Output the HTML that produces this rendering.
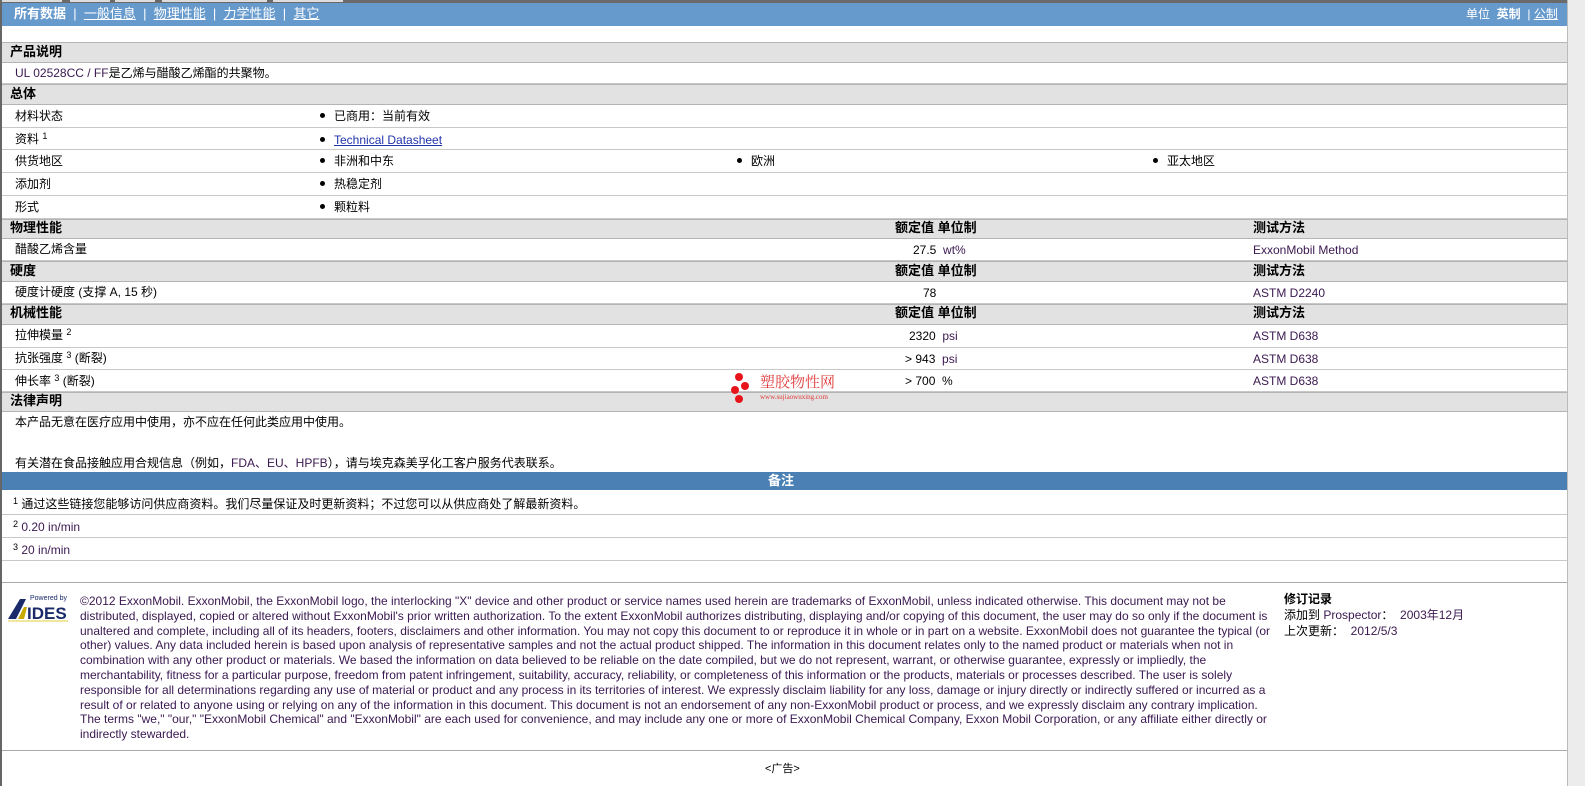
<!DOCTYPE html>
<html><head><meta charset="utf-8">
<style>
*{margin:0;padding:0;box-sizing:border-box}
body{width:1585px;height:786px;position:relative;overflow:hidden;background:#fff;font-family:"Liberation Sans","Noto Sans CJK SC",sans-serif;font-size:12px;color:#000}
.a{position:absolute}
.row{position:absolute;left:2px;width:1565px;border-bottom:1px solid #c8c8c8}
.h{background:#e2e2e2;border-top:1px solid #b4b4b4;border-bottom:1px solid #b4b4b4;font-weight:bold;font-size:13px}
.t{position:absolute;white-space:nowrap;line-height:14px}
.pu{color:#3a1850}
sup{font-size:9px;vertical-align:top;position:relative;top:-3px}
.b{font-weight:bold}
.dot{display:inline-block;width:5px;height:5px;border-radius:50%;background:#000;margin-right:9px;vertical-align:middle;position:relative;top:-1px}
</style></head><body>
<div class="a" style="left:0;top:0;width:2px;height:786px;background:#666"></div>
<div class="a" style="left:1567px;top:0;width:18px;height:786px;background:#ececec;border-left:1px solid #bbb"></div>
<div class="a" style="left:0;top:0;width:1567px;height:3px;background:#6a6a6a"></div>
<div class="a" style="left:2px;top:0;width:60px;height:2px;background:#ddd"></div>
<div class="a" style="left:70px;top:0;width:40px;height:2px;background:#ddd"></div>
<div class="a" style="left:115px;top:0;width:40px;height:2px;background:#ddd"></div>
<div class="a" style="left:162px;top:0;width:105px;height:2px;background:#ddd"></div>
<div class="a" style="left:273px;top:0;width:70px;height:2px;background:#ddd"></div>
<div class="a" style="left:2px;top:3px;width:1565px;height:23px;background:#6699cc"></div>
<div class="t" style="left:14px;top:7px;color:#fff;font-size:13px"><b>所有数据</b> &nbsp;| &nbsp;<u>一般信息</u> &nbsp;| &nbsp;<u>物理性能</u> &nbsp;| &nbsp;<u>力学性能</u> &nbsp;| &nbsp;<u>其它</u></div>
<div class="t" style="left:1466px;top:7px;color:#fff">单位 &nbsp;<b>英制</b> &nbsp;| <u>公制</u></div>

<div class="row h" style="top:42px;height:21px"></div><div class="t b" style="left:10px;top:45px;font-size:13px">产品说明</div>
<div class="row" style="top:63px;height:21px"></div><div class="t" style="left:15px;top:66px"><span class="pu">UL 02528CC / FF</span>是乙烯与醋酸乙烯酯的共聚物。</div>
<div class="row h" style="top:84px;height:21px"></div><div class="t b" style="left:10px;top:87px;font-size:13px">总体</div>
<div class="row" style="top:105px;height:23px"></div><div class="t" style="left:15px;top:109px">材料状态</div><div class="t" style="left:320px;top:109px"><span class="dot"></span>已商用：当前有效</div>
<div class="row" style="top:128px;height:22px"></div><div class="t" style="left:15px;top:132px">资料 <sup>1</sup></div><div class="t" style="left:320px;top:133px"><span class="dot"></span><u style="color:#2233aa">Technical Datasheet</u></div>
<div class="row" style="top:150px;height:23px"></div><div class="t" style="left:15px;top:154px">供货地区</div><div class="t" style="left:320px;top:154px"><span class="dot"></span>非洲和中东</div><div class="t" style="left:737px;top:154px"><span class="dot"></span>欧洲</div><div class="t" style="left:1153px;top:154px"><span class="dot"></span>亚太地区</div>
<div class="row" style="top:173px;height:23px"></div><div class="t" style="left:15px;top:177px">添加剂</div><div class="t" style="left:320px;top:177px"><span class="dot"></span>热稳定剂</div>
<div class="row" style="top:196px;height:23px"></div><div class="t" style="left:15px;top:200px">形式</div><div class="t" style="left:320px;top:200px"><span class="dot"></span>颗粒料</div>

<div class="row h" style="top:219px;height:20px"></div><div class="t b" style="left:10px;top:221px;font-size:13px">物理性能</div><div class="t b" style="left:895px;top:221px;font-size:13px">额定值 单位制</div><div class="t b" style="left:1253px;top:221px;font-size:13px">测试方法</div>
<div class="row" style="top:239px;height:22px"></div><div class="t" style="left:15px;top:242px">醋酸乙烯含量</div><div class="t" style="left:913px;top:243px">27.5 &nbsp;<span class="pu">wt%</span></div><div class="t pu" style="left:1253px;top:243px">ExxonMobil Method</div>
<div class="row h" style="top:261px;height:21px"></div><div class="t b" style="left:10px;top:264px;font-size:13px">硬度</div><div class="t b" style="left:895px;top:264px;font-size:13px">额定值 单位制</div><div class="t b" style="left:1253px;top:264px;font-size:13px">测试方法</div>
<div class="row" style="top:282px;height:22px"></div><div class="t" style="left:15px;top:285px">硬度计硬度 (支撑 A, 15 秒)</div><div class="t" style="left:923px;top:286px">78</div><div class="t pu" style="left:1253px;top:286px">ASTM D2240</div>
<div class="row h" style="top:304px;height:21px"></div><div class="t b" style="left:10px;top:306px;font-size:13px">机械性能</div><div class="t b" style="left:895px;top:306px;font-size:13px">额定值 单位制</div><div class="t b" style="left:1253px;top:306px;font-size:13px">测试方法</div>
<div class="row" style="top:325px;height:23px"></div><div class="t" style="left:15px;top:328px">拉伸模量 <sup>2</sup></div><div class="t" style="left:909px;top:329px">2320 &nbsp;<span class="pu">psi</span></div><div class="t pu" style="left:1253px;top:329px">ASTM D638</div>
<div class="row" style="top:348px;height:22px"></div><div class="t" style="left:15px;top:351px">抗张强度 <sup>3</sup> (断裂)</div><div class="t" style="left:905px;top:352px">&gt; 943 &nbsp;<span class="pu">psi</span></div><div class="t pu" style="left:1253px;top:352px">ASTM D638</div>
<div class="row" style="top:370px;height:22px"></div><div class="t" style="left:15px;top:374px">伸长率 <sup>3</sup> (断裂)</div><div class="t" style="left:905px;top:374px">&gt; 700 &nbsp;%</div><div class="t pu" style="left:1253px;top:374px">ASTM D638</div>
<div class="row h" style="top:392px;height:20px"></div><div class="t b" style="left:10px;top:394px;font-size:13px">法律声明</div>
<div class="t" style="left:15px;top:415px">本产品无意在医疗应用中使用，亦不应在任何此类应用中使用。</div>
<div class="t" style="left:15px;top:456px">有关潜在食品接触应用合规信息（例如，<span class="pu">FDA、EU、HPFB</span>），请与埃克森美孚化工客户服务代表联系。</div>

<div class="a" style="left:735px;top:373px;width:8px;height:8px;border-radius:50%;background:#e8141c"></div>
<div class="a" style="left:741px;top:382px;width:8px;height:8px;border-radius:50%;background:#e8141c"></div>
<div class="a" style="left:731px;top:386px;width:8px;height:8px;border-radius:50%;background:#e8141c"></div>
<div class="a" style="left:735px;top:395px;width:8px;height:8px;border-radius:50%;background:#e8141c"></div>
<div class="t" style="left:760px;top:375px;color:#e03a3a;font-size:15px;font-family:'Noto Serif CJK SC',serif">塑胶物性网</div>
<div class="t" style="left:760px;top:393px;color:#e03a3a;font-size:7px;font-family:'Liberation Serif',serif;line-height:8px">www.sujiaowuxing.com</div>

<div class="a" style="left:2px;top:472px;width:1565px;height:18px;background:#4a80b4"></div>
<div class="t b" style="left:768px;top:474px;color:#fff;font-size:13px">备注</div>
<div class="row" style="top:490px;height:25px"></div><div class="t" style="left:13px;top:497px"><sup>1</sup> 通过这些链接您能够访问供应商资料。我们尽量保证及时更新资料；不过您可以从供应商处了解最新资料。</div>
<div class="row" style="top:515px;height:23px"></div><div class="t" style="left:13px;top:520px"><sup>2</sup> <span class="pu">0.20 in/min</span></div>
<div class="row" style="top:538px;height:23px"></div><div class="t" style="left:13px;top:543px"><sup>3</sup> <span class="pu">20 in/min</span></div>
<div class="a" style="left:2px;top:582px;width:1565px;height:1px;background:#aaa"></div>

<div class="a" style="left:8px;top:593px;width:62px;height:30px">
<svg width="62" height="30" viewBox="0 0 62 30"><polygon points="0,26 12,6 18,6 8,26" fill="#1a2a6a"/><polygon points="10,26 16,14 19,14 16,26" fill="#c9a800"/><text x="22" y="7" font-size="7" fill="#1a2a6a" font-family="Liberation Sans">Powered by</text><text x="19" y="26" font-size="17" font-weight="bold" fill="#1a2a6a" font-family="Liberation Sans">IDES</text><rect x="0" y="27" width="60" height="2" fill="#f0e6a0"/></svg></div>
<div class="a" style="left:80px;top:594px;width:1198px;font-size:12px;line-height:14.8px;color:#3a1850">©2012 ExxonMobil. ExxonMobil, the ExxonMobil logo, the interlocking "X" device and other product or service names used herein are trademarks of ExxonMobil, unless indicated otherwise. This document may not be distributed, displayed, copied or altered without ExxonMobil's prior written authorization. To the extent ExxonMobil authorizes distributing, displaying and/or copying of this document, the user may do so only if the document is unaltered and complete, including all of its headers, footers, disclaimers and other information. You may not copy this document to or reproduce it in whole or in part on a website. ExxonMobil does not guarantee the typical (or other) values. Any data included herein is based upon analysis of representative samples and not the actual product shipped. The information in this document relates only to the named product or materials when not in combination with any other product or materials. We based the information on data believed to be reliable on the date compiled, but we do not represent, warrant, or otherwise guarantee, expressly or impliedly, the merchantability, fitness for a particular purpose, freedom from patent infringement, suitability, accuracy, reliability, or completeness of this information or the products, materials or processes described. The user is solely responsible for all determinations regarding any use of material or product and any process in its territories of interest. We expressly disclaim liability for any loss, damage or injury directly or indirectly suffered or incurred as a result of or related to anyone using or relying on any of the information in this document. This document is not an endorsement of any non-ExxonMobil product or process, and we expressly disclaim any contrary implication. The terms "we," "our," "ExxonMobil Chemical" and "ExxonMobil" are each used for convenience, and may include any one or more of ExxonMobil Chemical Company, Exxon Mobil Corporation, or any affiliate either directly or indirectly stewarded.</div>
<div class="t b" style="left:1284px;top:592px">修订记录</div>
<div class="t" style="left:1284px;top:608px">添加到 <span class="pu">Prospector</span>： &nbsp;<span class="pu">2003年12月</span></div>
<div class="t" style="left:1284px;top:624px">上次更新： &nbsp;<span class="pu">2012/5/3</span></div>
<div class="a" style="left:2px;top:750px;width:1565px;height:1px;background:#aaa"></div>
<div class="t" style="left:765px;top:762px;font-size:11px">&lt;广告&gt;</div>
</body></html>
